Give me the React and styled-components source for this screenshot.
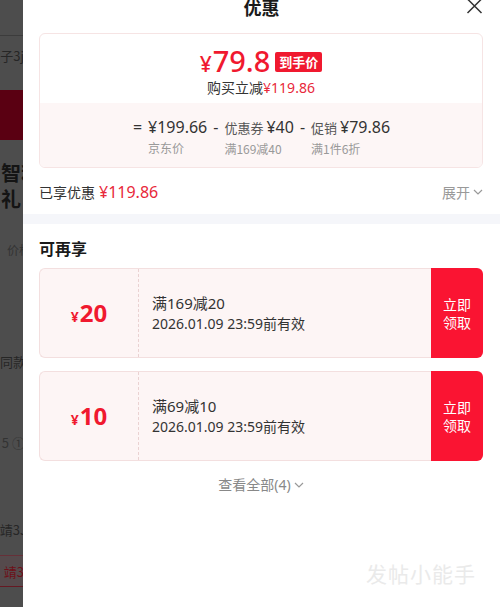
import React from "react";
import styled, { createGlobalStyle } from "styled-components";

const GlobalStyle = createGlobalStyle`
  * { box-sizing: border-box; }
  body {
    margin: 0;
    font-family: "Noto Sans", "Noto Sans CJK SC", sans-serif;
    background: #4d4d4d;
  }
`;

const RED = "#f0192f";

const Page = styled.div`
  position: relative;
  display: flex;
  width: 500px;
  height: 607px;
  overflow: hidden;
  background: #4d4d4d;
`;

// dimmed page peeking out from behind the sheet
const Peek = styled.div`
  width: 23px;
  flex-shrink: 0;
  display: flex;
  flex-direction: column;
  overflow: hidden;
  background: #4d4d4d;
`;

const PeekRule = styled.div`
  margin-top: ${(p) => p.$mt}px;
  height: 1px;
  background: #3c3c3c;
`;

const PeekText = styled.div`
  margin-top: ${(p) => p.$mt}px;
  margin-right: ${(p) => -(p.$cut || 0)}px;
  height: ${(p) => p.$h}px;
  line-height: ${(p) => p.$h}px;
  display: flex;
  justify-content: flex-end;
  white-space: nowrap;
  font-family: "Noto Sans CJK SC", sans-serif;
  font-size: ${(p) => p.$size}px;
  font-weight: ${(p) => (p.$bold ? 700 : 400)};
  color: ${(p) => p.$color || "#262626"};
`;

const PeekBar = styled.div`
  margin-top: ${(p) => p.$mt}px;
  height: 50px;
  background: #5a0012;
`;

const PeekTag = styled.div`
  margin-top: 15px;
  margin-right: -8px;
  height: 32px;
  display: flex;
  justify-content: flex-end;
  align-items: center;
  background: #554a4c;
  border-top: 1px solid #663038;
  border-bottom: 1px solid #661822;
  font-family: "Noto Sans CJK SC", sans-serif;
  font-size: 13px;
  color: #6e0f18;
  white-space: nowrap;
`;

const Sheet = styled.div`
  flex: 1;
  display: flex;
  flex-direction: column;
  background: #fff;
`;

const Header = styled.div`
  height: 33px;
  display: grid;
  grid-template-columns: 1fr auto 1fr;
  align-items: start;
`;

const Title = styled.div`
  grid-column: 2;
  font-family: "Noto Sans CJK SC", sans-serif;
  font-size: 18px;
  font-weight: 700;
  line-height: 14px;
  color: #1a1a1a;
`;

const Close = styled.button`
  grid-column: 3;
  justify-self: end;
  margin: -2px 17px 0 0;
  padding: 0;
  border: none;
  background: none;
  display: flex;
  cursor: pointer;
`;

const Card = styled.div`
  margin: 0 17px 0 16px;
  border: 1px solid #f6e4e4;
  border-radius: 6px;
  overflow: hidden;
`;

const CardTop = styled.div`
  padding: 12px 0 5px;
  display: flex;
  flex-direction: column;
  align-items: center;
`;

const PriceRow = styled.div`
  height: 32px;
  display: flex;
  align-items: center;
  gap: 5px;
`;

const Price = styled.div`
  color: ${RED};
  font-size: 29px;
  font-weight: 500;
  line-height: 32px;
  span {
    font-size: 21px;
    margin-right: 1px;
  }
`;

const Badge = styled.span`
  height: 20px;
  line-height: 20px;
  padding: 0 4px;
  border-radius: 2px;
  background: ${RED};
  color: #fff;
  font-family: "Noto Sans CJK SC", sans-serif;
  font-size: 13px;
  font-weight: 700;
`;

const SaveLine = styled.div`
  font-size: 14px;
  line-height: 20px;
  color: #333;
  span {
    color: #e8283a;
  }
`;

const CardBottom = styled.div`
  padding: 13px 0 10px;
  display: flex;
  justify-content: center;
  background: #fdf6f6;
`;

const Formula = styled.div`
  display: flex;
  align-items: flex-start;
  gap: 5px;
`;

const Sym = styled.div`
  font-size: 16px;
  line-height: 22px;
  color: #333;
  padding: 0 1px;
`;

const Col = styled.div`
  display: flex;
  flex-direction: column;
`;

const Val = styled.div`
  font-size: 16px;
  line-height: 22px;
  color: #333;
  white-space: nowrap;
  small {
    font-size: 13px;
    color: #555;
    margin-right: 3px;
  }
`;

const Lbl = styled.div`
  margin-top: 2px;
  font-family: "Noto Sans CJK SC", sans-serif;
  font-size: 12px;
  line-height: 16px;
  color: #999;
`;

const Summary = styled.div`
  margin: 11px 17px 0 16px;
  height: 26px;
  display: flex;
  align-items: center;
  justify-content: space-between;
`;

const Saved = styled.div`
  font-size: 14px;
  color: #333;
  span {
    font-size: 16px;
    color: #e8283a;
    margin-left: 4px;
  }
`;

const Toggle = styled.div`
  display: flex;
  align-items: center;
  gap: 3px;
  font-size: 14px;
  color: #999;
`;

const Band = styled.div`
  margin-top: 9px;
  height: 10px;
  background: #f5f6fa;
`;

const Section = styled.div`
  padding: 14px 17px 0 16px;
`;

const SectionTitle = styled.div`
  font-family: "Noto Sans CJK SC", sans-serif;
  font-size: 16px;
  font-weight: 700;
  line-height: 20px;
  color: #1a1a1a;
  margin-bottom: 10px;
`;

const CouponList = styled.div`
  display: flex;
  flex-direction: column;
  gap: 13px;
`;

const Coupon = styled.div`
  display: flex;
  height: 90px;
`;

const CouponBody = styled.div`
  flex: 1;
  display: flex;
  background: #fdf5f5;
  border: 1px solid #f3dfdf;
  border-right: none;
  border-radius: 6px 0 0 6px;
`;

const Amount = styled.div`
  width: 99px;
  display: flex;
  align-items: center;
  justify-content: center;
  border-right: 1px dashed #ead2d2;
  color: ${RED};
  font-weight: 700;
  font-size: 24px;
  line-height: 1;
  span {
    font-size: 14px;
    margin-right: 1px;
  }
`;

const Info = styled.div`
  padding-left: 13px;
  display: flex;
  flex-direction: column;
  justify-content: center;
  gap: 2px;
`;

const CouponTitle = styled.div`
  font-size: 15px;
  line-height: 20px;
  color: #333;
`;

const CouponDate = styled.div`
  font-size: 14px;
  line-height: 18px;
  color: #333;
`;

const Claim = styled.button`
  width: 52px;
  border: none;
  border-radius: 0 6px 6px 0;
  background: #fa1432;
  color: #fff;
  font-family: "Noto Sans CJK SC", sans-serif;
  font-size: 14px;
  line-height: 18px;
  padding: 0;
  cursor: pointer;
`;

const More = styled.div`
  margin-top: 14px;
  display: flex;
  align-items: center;
  justify-content: center;
  gap: 3px;
  font-size: 14px;
  line-height: 20px;
  color: #888;
`;

const Watermark = styled.div`
  position: absolute;
  right: 24px;
  bottom: 19px;
  font-family: "Noto Sans CJK SC", sans-serif;
  font-size: 21px;
  letter-spacing: 1px;
  color: #eaeaea;
  pointer-events: none;
`;

const Chevron = () => (
  <svg width="10" height="6" viewBox="0 0 10 6">
    <polyline points="1,1 5,5 9,1" fill="none" stroke="#999" strokeWidth="1.2" />
  </svg>
);

const coupons = [
  { amount: 20, title: "满169减20", date: "2026.01.09 23:59前有效" },
  { amount: 10, title: "满69减10", date: "2026.01.09 23:59前有效" },
];

export default function App() {
  return (
    <>
      <GlobalStyle />
      <Page>
        <Peek>
          <PeekRule $mt={35} />
          <PeekText $mt={10} $h={20} $size={13} $cut={1}>盒子3j</PeekText>
          <PeekBar $mt={24} />
          <PeekText $mt={20} $h={26} $size={20} $bold $cut={18} $color="#141414">智利</PeekText>
          <PeekText $mt={0} $h={26} $size={20} $bold $cut={18} $color="#141414">礼目</PeekText>
          <PeekText $mt={28} $h={20} $size={12} $cut={8} $color="#333">价格</PeekText>
          <PeekText $mt={92} $h={20} $size={13} $cut={3}>同款</PeekText>
          <PeekText $mt={61} $h={20} $size={13} $cut={2} $color="#333">5 ①</PeekText>
          <PeekText $mt={67} $h={20} $size={13} $cut={4}>靖3J</PeekText>
          <PeekTag>靖3J</PeekTag>
        </Peek>

        <Sheet>
          <Header>
            <Title>优惠</Title>
            <Close aria-label="关闭">
              <svg width="17" height="16" viewBox="0 0 17 16">
                <path d="M1.5 1 L15.5 15 M15.5 1 L1.5 15" stroke="#333" strokeWidth="1.5" fill="none" />
              </svg>
            </Close>
          </Header>

          <Card>
            <CardTop>
              <PriceRow>
                <Price>
                  <span>¥</span>79.8
                </Price>
                <Badge>到手价</Badge>
              </PriceRow>
              <SaveLine>
                购买立减<span>¥119.86</span>
              </SaveLine>
            </CardTop>
            <CardBottom>
              <Formula>
                <Sym>=</Sym>
                <Col>
                  <Val>¥199.66</Val>
                  <Lbl>京东价</Lbl>
                </Col>
                <Sym>-</Sym>
                <Col>
                  <Val>
                    <small>优惠券</small>¥40
                  </Val>
                  <Lbl>满169减40</Lbl>
                </Col>
                <Sym>-</Sym>
                <Col>
                  <Val>
                    <small>促销</small>¥79.86
                  </Val>
                  <Lbl>满1件6折</Lbl>
                </Col>
              </Formula>
            </CardBottom>
          </Card>

          <Summary>
            <Saved>
              已享优惠<span>¥119.86</span>
            </Saved>
            <Toggle>
              展开 <Chevron />
            </Toggle>
          </Summary>

          <Band />

          <Section>
            <SectionTitle>可再享</SectionTitle>
            <CouponList>
              {coupons.map((c) => (
                <Coupon key={c.title}>
                  <CouponBody>
                    <Amount>
                      <div>
                        <span>¥</span>
                        {c.amount}
                      </div>
                    </Amount>
                    <Info>
                      <CouponTitle>{c.title}</CouponTitle>
                      <CouponDate>{c.date}</CouponDate>
                    </Info>
                  </CouponBody>
                  <Claim>
                    立即
                    <br />
                    领取
                  </Claim>
                </Coupon>
              ))}
            </CouponList>
            <More>
              查看全部(4) <Chevron />
            </More>
          </Section>
        </Sheet>

        <Watermark>发帖小能手</Watermark>
      </Page>
    </>
  );
}
